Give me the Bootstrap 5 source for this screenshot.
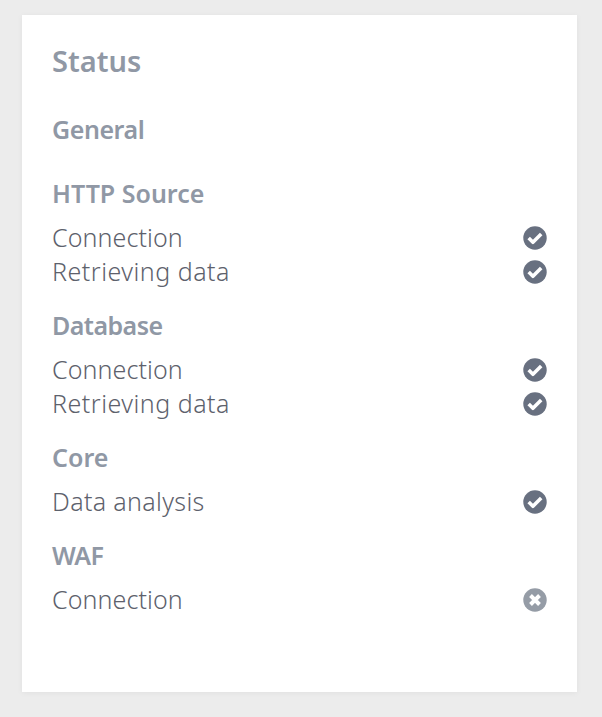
<!DOCTYPE html>
<html lang="en">
<head>
<meta charset="utf-8">
<meta name="viewport" content="width=device-width, initial-scale=1">
<title>Status</title>
<link href="https://cdn.jsdelivr.net/npm/bootstrap@5.3.0/dist/css/bootstrap.min.css" rel="stylesheet">
<style>
body{background:#ececec;font-family:"Noto Sans","Open Sans",sans-serif;height:717px;overflow:hidden;padding:15px 25px 25px 22px}
.status-card{height:677px;background:#fff;padding:28px 30px;box-shadow:0 1px 6px rgba(0,0,0,.05)}
h1,h2,h3{color:#9098a5;font-weight:600;white-space:nowrap}
h1{font-size:29px;line-height:36px}
h2,h3{font-size:25px;line-height:32px;padding-bottom:2px}
h2{margin-top:34px;letter-spacing:-.45px}
h3{margin-top:20px;margin-bottom:10px}
h2+section h3{margin-top:30px}
.status-row{height:34px;line-height:32px;font-size:25px;font-weight:300;color:#5d616c}
.status-row span{padding-bottom:2px}
.status-row svg{width:24px;height:24px;fill:#687080}
.status-row svg.off{fill:#959ca6}
.tight{letter-spacing:-.55px}
.track-1{letter-spacing:.1px}
.track-2{letter-spacing:.35px}
.track-3{letter-spacing:.5px}
</style>
</head>
<body>
<svg class="d-none"><symbol id="ok" viewBox="0 0 512 512"><circle cx="256" cy="256" r="250"/><path d="M121 258l91 91 176-177" fill="none" stroke="#fff" stroke-width="76" stroke-linejoin="round"/></symbol>
<symbol id="no" viewBox="0 0 512 512"><circle cx="256" cy="256" r="250"/><path d="M160 160l192 192M352 160L160 352" fill="none" stroke="#fff" stroke-width="84"/></symbol></svg>
<main class="status-card">
<h1 class="mb-0">Status</h1>
<h2 class="mb-0">General</h2>
<section><h3>HTTP Source</h3>
<div class="status-row d-flex justify-content-between align-items-center"><span class="track-1">Connection</span><svg><use href="#ok"/></svg></div>
<div class="status-row d-flex justify-content-between align-items-center"><span class="track-3">Retrieving data</span><svg><use href="#ok"/></svg></div></section>
<section><h3 class="tight">Database</h3>
<div class="status-row d-flex justify-content-between align-items-center"><span class="track-1">Connection</span><svg><use href="#ok"/></svg></div>
<div class="status-row d-flex justify-content-between align-items-center"><span class="track-3">Retrieving data</span><svg><use href="#ok"/></svg></div></section>
<section><h3>Core</h3>
<div class="status-row d-flex justify-content-between align-items-center"><span class="track-2">Data analysis</span><svg><use href="#ok"/></svg></div></section>
<section><h3 class="tight">WAF</h3>
<div class="status-row d-flex justify-content-between align-items-center"><span class="track-1">Connection</span><svg class="off"><use href="#no"/></svg></div></section>
</main>
<script src="https://cdn.jsdelivr.net/npm/bootstrap@5.3.0/dist/js/bootstrap.bundle.min.js"></script>
</body>
</html>
